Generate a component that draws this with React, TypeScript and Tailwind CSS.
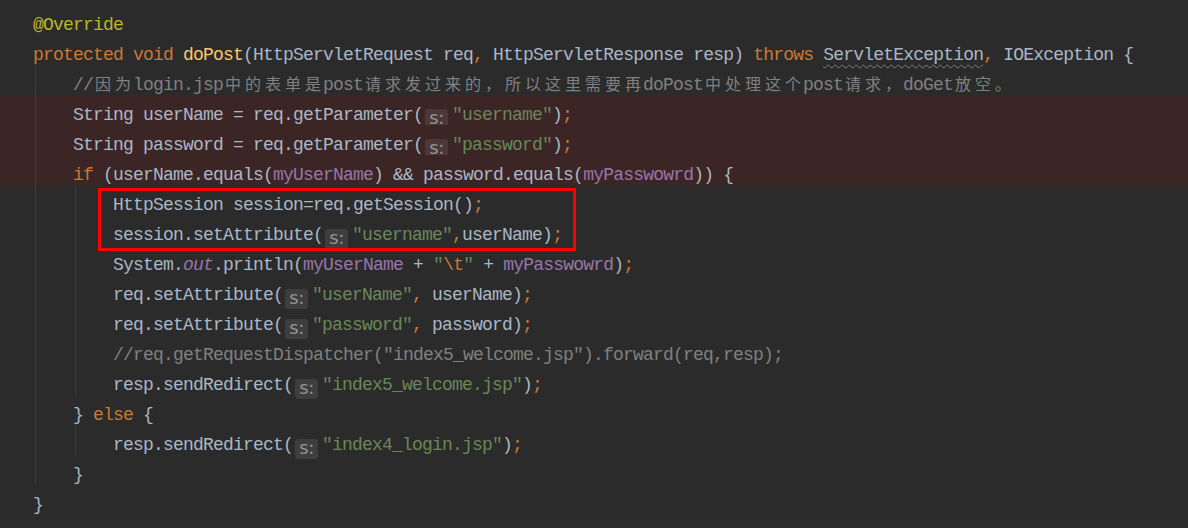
const D = "text-[#a9b7c6]";
const K = "text-[#cc7832]";
const S = "text-[#6a8759]";
const C = "text-[#808080]";
const F = "text-[#9876aa]";
const FI = "text-[#9876aa] italic";
const M = "text-[#ffc66d]";
const A = "text-[#bbb529]";
const W = "text-[#a9b7c6] underline decoration-wavy decoration-[#7f7f7f] decoration-1 underline-offset-[4px]";
const HINT = "hint";

type Tok = [string, string];
type Row = { indent: number; guides: number; hl?: boolean; toks: Tok[] };

const rows: Row[] = [
  { indent: 0, guides: 0, toks: [["@Override", A]] },
  {
    indent: 0,
    guides: 0,
    toks: [
      ["protected void ", K],
      ["doPost", M],
      ["(HttpServletRequest req", D],
      [", ", K],
      ["HttpServletResponse resp) ", D],
      ["throws ", K],
      ["ServletException", W],
      [", ", K],
      ["IOException {", D],
    ],
  },
  {
    indent: 1,
    guides: 1,
    toks: [["//因为login.jsp中的表单是post请求发过来的，所以这里需要再doPost中处理这个post请求，doGet放空。", C]],
  },
  {
    indent: 1,
    guides: 1,
    hl: true,
    toks: [
      ["String userName = req.getParameter(", D],
      ["", HINT],
      ['"username"', S],
      [")", D],
      [";", K],
    ],
  },
  {
    indent: 1,
    guides: 1,
    hl: true,
    toks: [
      ["String password = req.getParameter(", D],
      ["", HINT],
      ['"password"', S],
      [")", D],
      [";", K],
    ],
  },
  {
    indent: 1,
    guides: 1,
    hl: true,
    toks: [
      ["if ", K],
      ["(userName.equals(", D],
      ["myUserName", F],
      [") && password.equals(", D],
      ["myPasswowrd", F],
      [")) {", D],
    ],
  },
  {
    indent: 2,
    guides: 2,
    toks: [
      ["HttpSession session=req.getSession()", D],
      [";", K],
    ],
  },
  {
    indent: 2,
    guides: 2,
    toks: [
      ["session.setAttribute(", D],
      ["", HINT],
      ['"username"', S],
      [",", K],
      ["userName)", D],
      [";", K],
    ],
  },
  {
    indent: 2,
    guides: 2,
    toks: [
      ["System.", D],
      ["out", FI],
      [".println(", D],
      ["myUserName", F],
      [" + ", D],
      ['"', S],
      ["\\t", K],
      ['"', S],
      [" + ", D],
      ["myPasswowrd", F],
      [")", D],
      [";", K],
    ],
  },
  {
    indent: 2,
    guides: 2,
    toks: [
      ["req.setAttribute(", D],
      ["", HINT],
      ['"userName"', S],
      [", ", K],
      ["userName)", D],
      [";", K],
    ],
  },
  {
    indent: 2,
    guides: 2,
    toks: [
      ["req.setAttribute(", D],
      ["", HINT],
      ['"password"', S],
      [", ", K],
      ["password)", D],
      [";", K],
    ],
  },
  {
    indent: 2,
    guides: 2,
    toks: [['//req.getRequestDispatcher("index5_welcome.jsp").forward(req,resp);', C]],
  },
  {
    indent: 2,
    guides: 2,
    toks: [
      ["resp.sendRedirect(", D],
      ["", HINT],
      ['"index5_welcome.jsp"', S],
      [")", D],
      [";", K],
    ],
  },
  {
    indent: 1,
    guides: 1,
    toks: [
      ["} ", D],
      ["else ", K],
      ["{", D],
    ],
  },
  {
    indent: 2,
    guides: 2,
    toks: [
      ["resp.sendRedirect(", D],
      ["", HINT],
      ['"index4_login.jsp"', S],
      [")", D],
      [";", K],
    ],
  },
  { indent: 1, guides: 1, toks: [["}", D]] },
  { indent: 0, guides: 0, toks: [["}", D]] },
];

const CJK = /([\u3000-\u303f\u4e00-\u9fff\uff00-\uffef])/;

// parameter-name hint chip, like the IDE draws it
function Hint() {
  return (
    <span className="mr-[4px] ml-[2px] inline-flex h-[20px] w-[23px] items-center justify-center rounded-[3px] bg-white/[0.09] pb-[1px] align-[-4px] font-['DejaVu_Sans',sans-serif] text-[18px] leading-none tracking-[-0.5px] text-[#939393]">
      s:
    </span>
  );
}

function Piece({ tok }: { tok: Tok }) {
  const [text, cls] = tok;
  if (cls === HINT) return <Hint />;
  const parts = text.split(CJK).filter((p) => p !== "");
  return (
    <span className={cls}>
      {parts.map((p, i) =>
        CJK.test(p) ? (
          <span
            key={i}
            className="inline-block w-[20px] text-center font-['Noto_Sans_CJK_SC',sans-serif] text-[16px] leading-none tracking-normal"
          >
            {p}
          </span>
        ) : (
          <span key={i}>{p}</span>
        )
      )}
    </span>
  );
}

function Line({ row }: { row: Row }) {
  const blocks = Array.from({ length: row.indent }, (_, i) => i < row.guides);
  return (
    <div className={`flex h-[30px] shrink-0 pl-[33px] ${row.hl ? "bg-[#3b2525]" : ""}`}>
      {blocks.map((g, i) => (
        <div
          key={i}
          className={`ml-[2px] w-[38px] shrink-0 ${g ? "border-l border-[#3c3c3c]" : ""}`}
        />
      ))}
      <div className="whitespace-pre pt-[5px] leading-[30px]">
        {row.toks.map((t, i) => (
          <Piece key={i} tok={t} />
        ))}
      </div>
    </div>
  );
}

export default function App() {
  return (
    <div className="relative h-[528px] w-[1188px] overflow-hidden bg-[#2b2b2b] pt-[5px] font-['Liberation_Mono',monospace] text-[18px] tracking-[-0.8px]">
      <div className="flex flex-col">
        {rows.map((r, i) => (
          <Line key={i} row={r} />
        ))}
      </div>
      <div className="absolute left-[98px] top-[188px] h-[63px] w-[478px] border-[3px] border-[#ff0000]" />
    </div>
  );
}
